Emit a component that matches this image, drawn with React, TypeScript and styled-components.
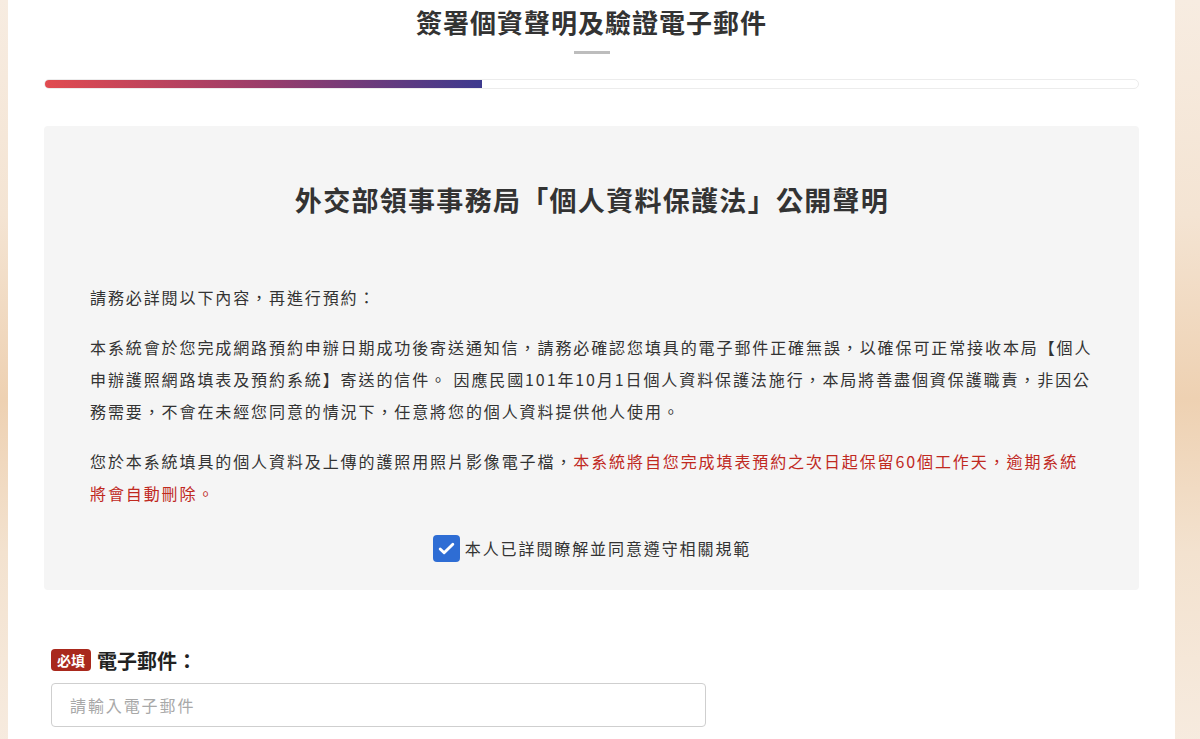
import styled, { createGlobalStyle } from "styled-components";

const GlobalStyle = createGlobalStyle`
  html, body {
    margin: 0;
    padding: 0;
  }
  body {
    font-family: "Noto Sans CJK TC", "Noto Sans", "Liberation Sans", sans-serif;
    color: #333;
    background: linear-gradient(
      180deg,
      #f7ece1 0%,
      #f4e4d3 28%,
      #eed1b2 52%,
      #f3e2cf 72%,
      #f7ece1 100%
    );
  }
`;

const Page = styled.div`
  display: flex;
  min-height: 100vh;
  padding-left: 8px;
`;

const Container = styled.main`
  width: 1167px;
  box-sizing: border-box;
  background: #fff;
  padding: 4px 36px 40px;
`;

const Title = styled.h1`
  margin: 0;
  text-align: center;
  font-size: 26px;
  line-height: 36px;
  font-weight: 700;
  letter-spacing: 1px;
  color: #333;
`;

const Divider = styled.div`
  width: 36px;
  height: 3px;
  margin: 11px auto 0;
  background: #bdbdbd;
`;

const Track = styled.div`
  margin-top: 25px;
  height: 10px;
  box-sizing: border-box;
  border: 1px solid #ececec;
  border-radius: 6px;
  overflow: hidden;
  background: #fff;
`;

const Fill = styled.div<{ $pct: number }>`
  width: ${(p) => p.$pct}%;
  height: 100%;
  background: linear-gradient(90deg, #e14b50 0%, #9a3d6a 50%, #3d3a8e 100%);
`;

const Statement = styled.section`
  margin-top: 37px;
  background: #f5f5f5;
  border-radius: 4px;
  padding: 56px 45px 26px 46px;
`;

const StatementTitle = styled.h2`
  margin: 0 0 63px;
  text-align: center;
  font-size: 27px;
  line-height: 36px;
  font-weight: 700;
  letter-spacing: 1.3px;
  color: #333;
`;

const Para = styled.p`
  margin: 0 0 18px;
  font-size: 16px;
  line-height: 32px;
  letter-spacing: 1.9px;
  color: #333;
`;

const Warn = styled.span`
  color: #c0291f;
`;

const AgreeRow = styled.label`
  display: flex;
  align-items: center;
  justify-content: center;
  gap: 5px;
  margin-top: 23px;
  height: 32px;
  font-size: 16px;
  letter-spacing: 1.9px;
  color: #333;
  cursor: pointer;
`;

const CheckBox = styled.span<{ $checked: boolean }>`
  display: inline-flex;
  align-items: center;
  justify-content: center;
  width: 27px;
  height: 27px;
  border-radius: 4px;
  background: ${(p) => (p.$checked ? "#2e6dd4" : "#fff")};
  border: ${(p) => (p.$checked ? "none" : "1px solid #999")};
`;

const Field = styled.div`
  margin-top: 59px;
  padding-left: 7px;
`;

const LabelRow = styled.div`
  display: flex;
  align-items: center;
  gap: 6px;
  height: 22px;
`;

const Badge = styled.span`
  display: inline-flex;
  align-items: center;
  justify-content: center;
  width: 40px;
  height: 22px;
  border-radius: 4px;
  background: #a9291d;
  color: #fff;
  font-size: 14px;
  font-weight: 700;
`;

const FieldLabel = styled.span`
  font-size: 20px;
  font-weight: 700;
  color: #222;
`;

const Input = styled.input`
  display: block;
  margin-top: 12px;
  width: 655px;
  height: 44px;
  box-sizing: border-box;
  border: 1px solid #cfcfcf;
  border-radius: 4px;
  padding: 0 18px;
  font-family: inherit;
  font-size: 16px;
  letter-spacing: 1.9px;
  color: #333;
  outline: none;
  &::placeholder {
    color: #a8a8a8;
  }
`;

export default function App() {
  return (
    <>
      <GlobalStyle />
      <Page>
        <Container>
          <Title>簽署個資聲明及驗證電子郵件</Title>
          <Divider />
          <Track>
            <Fill $pct={40} />
          </Track>

          <Statement>
            <StatementTitle>外交部領事事務局「個人資料保護法」公開聲明</StatementTitle>
            <Para>請務必詳閱以下內容，再進行預約：</Para>
            <Para>
              本系統會於您完成網路預約申辦日期成功後寄送通知信，請務必確認您填具的電子郵件正確無誤，以確保可正常接收本局【個人申辦護照網路填表及預約系統】寄送的信件。
              因應民國101年10月1日個人資料保護法施行，本局將善盡個資保護職責，非因公務需要，不會在未經您同意的情況下，任意將您的個人資料提供他人使用。
            </Para>
            <Para>
              您於本系統填具的個人資料及上傳的護照用照片影像電子檔，
              <Warn>本系統將自您完成填表預約之次日起保留60個工作天，逾期系統將會自動刪除。</Warn>
            </Para>
            <AgreeRow>
              <CheckBox $checked>
                <svg width="19" height="19" viewBox="0 0 24 24" fill="none">
                  <path
                    d="M4 12.5l5 5L20 6.5"
                    stroke="#fff"
                    strokeWidth="3.6"
                    strokeLinecap="round"
                    strokeLinejoin="round"
                  />
                </svg>
              </CheckBox>
              本人已詳閱瞭解並同意遵守相關規範
            </AgreeRow>
          </Statement>

          <Field>
            <LabelRow>
              <Badge>必填</Badge>
              <FieldLabel>電子郵件：</FieldLabel>
            </LabelRow>
            <Input type="email" placeholder="請輸入電子郵件" />
          </Field>
        </Container>
      </Page>
    </>
  );
}
